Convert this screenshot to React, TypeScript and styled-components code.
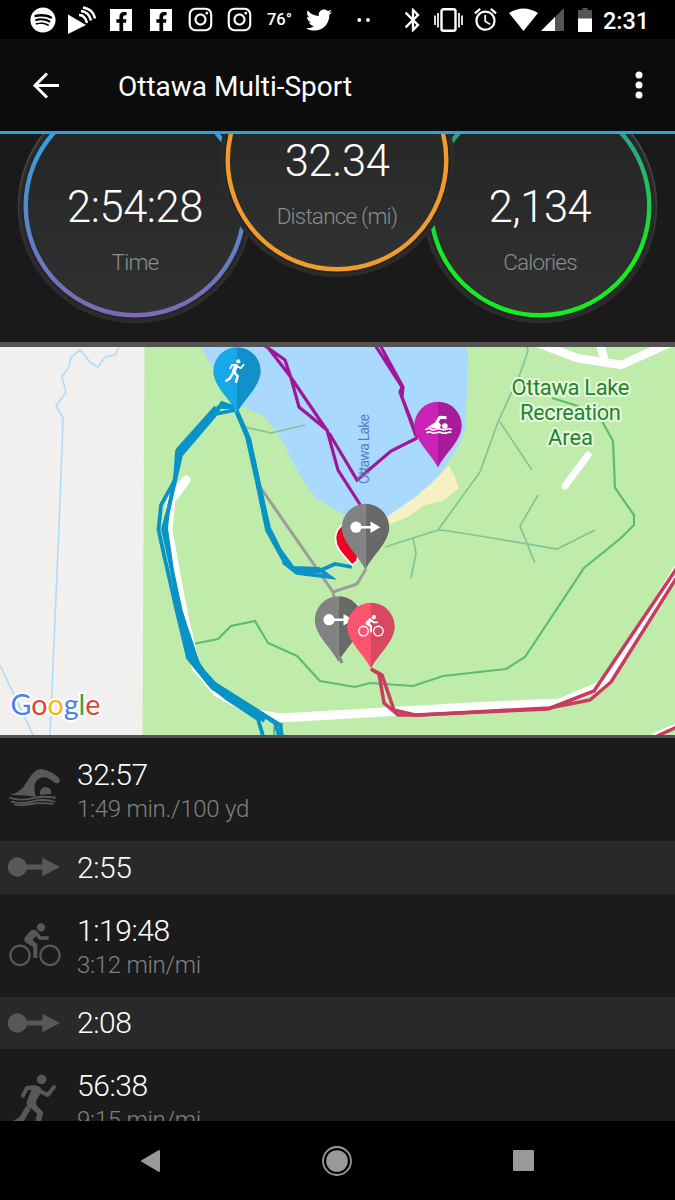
import React from 'react';
import styled, { createGlobalStyle } from 'styled-components';
import { FaSpotify, FaFacebookF, FaInstagram, FaTwitter } from 'react-icons/fa';
import { MdBluetooth, MdAlarm } from 'react-icons/md';

const GlobalStyle = createGlobalStyle`
  *, *::before, *::after { box-sizing: border-box; }
  body { margin: 0; background: #000; font-family: Roboto, "Liberation Sans", sans-serif; }
  svg { display: block; }
`;

const Screen = styled.div`
  width: 675px;
  height: 1200px;
  display: flex;
  flex-direction: column;
  overflow: hidden;
  background: #1b1b1b;
  color: #fff;
`;

const StatusBar = styled.div`
  flex: none;
  height: 39px;
  display: flex;
  align-items: center;
  background: #000;
`;

const StatusItem = styled.div<{ $w: number; $gap: number }>`
  flex: none;
  width: ${(p) => p.$w}px;
  margin-left: ${(p) => p.$gap}px;
  height: 39px;
  display: flex;
  align-items: center;
  justify-content: center;
  svg { flex: none; }
`;

const FacebookTile = styled.div`
  width: 22px;
  height: 22px;
  background: #fff;
  color: #000;
  display: flex;
  justify-content: flex-end;
  align-items: flex-end;
  padding-right: 1px;
  overflow: hidden;
`;

const Temperature = styled.span`
  font-size: 16.5px;
  font-weight: 500;
  white-space: nowrap;
  line-height: 39px;
`;

const Clock = styled.span`
  font-size: 23.5px;
  font-weight: 500;
  white-space: nowrap;
  padding-top: 3px;
`;

const AppBar = styled.header`
  flex: none;
  height: 95px;
  padding: 0 28px 0 30px;
  display: flex;
  align-items: center;
  background: #0c0c0c;
  border-bottom: 3px solid #2ca3dd;
`;

const Title = styled.h1`
  margin: 3px 0 0 56px;
  flex: 1;
  font-size: 28px;
  font-weight: 400;
`;

const GaugePanel = styled.section`
  flex: none;
  height: 208px;
  overflow: hidden;
  background: #1a1a1a;
`;

const GaugeRow = styled.div`
  display: flex;
  align-items: flex-start;
  margin-top: -92px;
  padding-left: 17px;
`;

const GaugeBox = styled.div<{ $raised?: boolean }>`
  flex: none;
  width: 236px;
  height: 236px;
  display: grid;
  margin-top: ${(p) => (p.$raised ? 0 : 46)}px;
  margin-left: ${(p) => (p.$raised ? -34 : 0)}px;
  margin-right: ${(p) => (p.$raised ? -33 : 0)}px;
  z-index: ${(p) => (p.$raised ? 1 : 0)};
  > * { grid-area: 1 / 1; }
`;

const GaugeText = styled.div`
  display: flex;
  flex-direction: column;
  align-items: center;
  padding-top: 95px;
`;

const GaugeValue = styled.div`
  font-size: 43.5px;
  font-weight: 300;
  line-height: 50px;
  letter-spacing: -0.45px;
`;

const GaugeLabel = styled.div`
  margin-top: 16px;
  font-size: 22.5px;
  font-weight: 300;
  line-height: 26px;
  letter-spacing: -0.8px;
  color: #8b8b8b;
`;

const MapFrame = styled.section`
  flex: none;
  height: 396px;
  border-top: 5px solid #555352;
  border-bottom: 3px solid #505152;
`;

const SegmentList = styled.ul`
  flex: 1;
  min-height: 0;
  margin: 0;
  padding: 0;
  overflow: hidden;
  list-style: none;
`;

const Segment = styled.li<{ $transition?: boolean }>`
  height: ${(p) => (p.$transition ? 52.5 : 103)}px;
  padding-left: 8px;
  display: flex;
  align-items: ${(p) => (p.$transition ? 'center' : 'flex-start')};
  background: ${(p) => (p.$transition ? '#292929' : '#1b1b1b')};
`;

const SegmentIcon = styled.div<{ $top?: number }>`
  width: 52px;
  margin-right: 17px;
  padding-top: ${(p) => p.$top ?? 0}px;
  color: #585858;
`;

const SegmentText = styled.div<{ $transition?: boolean }>`
  padding-top: ${(p) => (p.$transition ? 0 : 19)}px;
`;

const Duration = styled.div`
  font-size: 30px;
  font-weight: 300;
  line-height: 35px;
  letter-spacing: -0.45px;
`;

const Pace = styled.div`
  font-size: 24px;
  font-weight: 300;
  line-height: 34px;
  letter-spacing: -0.27px;
  color: #808080;
`;

const NavBar = styled.nav`
  flex: none;
  height: 79px;
  display: flex;
  align-items: center;
  background: #000;
  padding: 0 141px 0 140px;
  justify-content: space-between;
`;

type IconProps = React.SVGProps<SVGSVGElement>;

const SwimIcon = (p: IconProps) => (
  <svg viewBox="24 98 156 120" width="52" height="40" {...p}>
    <path fill="currentColor" d="M30 182Q58 174 70 158C88 132 100 106 122 104C140 106 164 118 176 130Q181 137 179 143Q175 149 166 146Q146 131 134 129Q115 129 107 144C101 157 103 171 108 187Q70 181 30 182Z" />
    <path fill="currentColor" d="M122 182A17 16 0 1 1 153 179Q138 179 122 182Z" />
    <path fill="none" stroke="currentColor" strokeWidth="5.500" d="M27 190Q62 201 96 192T167 191M33 202Q64 210 98 201T166 203M42 211Q66 214 94 209T160 209" />
  </svg>
);

/* Compact swimmer used on the map pin: bent arm over two rows of waves. */
const SwimPinIcon = (p: IconProps) => (
  <svg viewBox="298 58 84 62" width="28" height="20.7" {...p}>
    <g fill="none" stroke="currentColor" strokeLinejoin="round">
      <path strokeWidth="9" d="M364 69L344 68L334 84" />
      <path strokeWidth="5" d="M301 106Q308 98 316 103T332 104T348 104T364 104T380 105M304 115Q312 109 318 113T334 114T350 114T366 114T378 114" />
    </g>
    <path fill="currentColor" d="M337 78L348 92L344 100Q330 104 308 97Z" />
    <circle cx="359" cy="94" r="8.500" fill="currentColor" />
  </svg>
);

const BikeIcon = ({ wheel = 6.5, ...p }: IconProps & { wheel?: number }) => (
  <svg viewBox="22 560 160 136" width="53.3" height="45.3" {...p}>
    <g fill="none" stroke="currentColor" strokeWidth={wheel}>
      <circle cx="58" cy="660" r="29" />
      <circle cx="148" cy="660" r="29" />
    </g>
    <circle cx="121" cy="576" r="12.500" fill="currentColor" />
    <path fill="currentColor" d="M72 607L88 588Q98 579 108 587L121 603H144V613H116L106 602L95 614L110 626V668H98V636L76 622Q68 616 72 607Z" />
  </svg>
);

const RunIcon = (p: IconProps) => (
  <svg viewBox="24 312 156 180" width="52" height="60" {...p}>
    <circle cx="125" cy="328" r="14.500" fill="currentColor" />
    <g fill="none" stroke="currentColor" strokeLinecap="round" strokeLinejoin="round">
      <path strokeWidth="12" d="M69 377L80 355L106 353M112 360L143 375L162 351" />
      <path strokeWidth="17" d="M93 402L121 430L110 470M82 418L66 446L42 462" />
    </g>
    <path fill="currentColor" d="M78 349Q98 343 116 349Q128 356 122 369L108 394L110 408L88 416Q75 404 82 390L94 361Z" />
  </svg>
);

const TransitionIcon = (p: IconProps) => (
  <svg viewBox="0 0 52 20" width="52" height="20" fill="currentColor" {...p}>
    <circle cx="9.500" cy="10" r="9.700" />
    <path d="M18 7.600H34.300V.8L52 10L34.300 19.200V12.400H18Z" />
  </svg>
);

const TransitionPinIcon = () => (
  <g fill="currentColor">
    <circle cx="-9.500" cy="-0.300" r="5.600" />
    <path d="M-6-1.500H5V-6L14.800-.2L5 5.600V1H-6Z" />
  </g>
);

type GaugeProps = { id: string; value: string; label: string; from: string; to: string; raised?: boolean };

const Gauge = ({ id, value, label, from, to, raised }: GaugeProps) => (
  <GaugeBox $raised={raised}>
    <svg width="236" height="236" viewBox="0 0 236 236">
      <defs>
        <linearGradient id={`${id}-ring`} x1="0" y1="0" x2="0" y2="1">
          <stop offset="0.2" stopColor={from} />
          <stop offset={id === 'cal' ? 0.72 : 1} stopColor={to} />
        </linearGradient>
        <linearGradient id={`${id}-disc`} x1="0" y1="0" x2="0" y2="1">
          <stop offset="0" stopColor="#232323" />
          <stop offset="1" stopColor="#303131" />
        </linearGradient>
        <linearGradient id={`${id}-edge`} x1="0" y1="0" x2="0" y2="1">
          <stop offset="0.1" stopColor="#505050" />
          <stop offset="0.75" stopColor="#2c2c2c" />
        </linearGradient>
      </defs>
      <circle cx="118" cy="118" r="116.500" fill="#2b2b2b" stroke={raised ? '#2c2c2a' : `url(#${id}-edge)`} strokeWidth="1.600" />
      <circle cx="118" cy="118" r="112" fill="none" stroke="#1b1b1b" strokeWidth="2.500" opacity="0.4" />
      <circle cx="118" cy="118" r="109.300" fill={`url(#${id}-disc)`} stroke={`url(#${id}-ring)`} strokeWidth="4.400" />
    </svg>
    <GaugeText>
      <GaugeValue>{value}</GaugeValue>
      <GaugeLabel>{label}</GaugeLabel>
    </GaugeText>
  </GaugeBox>
);

type PinProps = { x: number; y: number; left: string; right: string; children?: React.ReactNode };

const Pin = ({ x, y, left, right, children }: PinProps) => (
  <g transform={`translate(${x} ${y})`} color="#fff">
    <path fill={left} d="M0 42C-7 28-23.700 15-23.700 0A23.700 23.700 0 0 1 0-23.700Z" />
    <path fill={right} d="M0 42C7 28 23.700 15 23.700 0A23.700 23.700 0 0 0 0-23.700Z" />
    {children}
  </g>
);

const TrailMap = () => (
  <svg width="675" height="388" viewBox="0 347 675 388">
    <rect y="347" width="675" height="388" fill="#bfecab" />
    <path fill="#f1f0ee" d="M0 347H144.500L142.500 735H0Z" />
    <g fill="none" stroke="#b2dcf7" strokeWidth="1.700">
      <path d="M119 347L115 355L105 357L98 367L91 363L80 350L71 357L69 367L62 377L66 392L56 406L63 418L62 450L58 550L50 735" />
      <path d="M0 665L33 735" />
    </g>
    <path fill="#aad9ff" d="M201 347L213 369L243 407L262 415L278 433L296 469L315 498L345 515L366 525L390 515L417 496L441 473L458 447L465 430L467 390L467.500 347Z" />
    <path fill="#f7efc5" d="M449 465L454 475L459 488L443 501L425 505L408 517L390 524L378 525L391 514L417 496L434 481Z" />
    <g fill="none" stroke="#82c496" strokeWidth="1.700">
      <path d="M527 347L528 351L520 374L498 422L480 472L438 530L385 547M245 427L271 433L305 425M500 422L532 470M413 538L416 553L411 578M438 530L449 531L498 539L557 549L595 530M538 495L520 526L535 563" />
      <path stroke="#5dbb73" strokeWidth="2.200" d="M193 644L218 639L231 626L255 621L268 643L297 656L320 681L355 687L370 683L413 686L443 676L506 669L525 657L584 568L621 538L634 525V515L615 488L613 441L602 421L578 406L552 398" />
      <path stroke="#65bd7c" strokeWidth="2" d="M274 727V735M282 720V735" />
    </g>
    <g fill="none" stroke="#fff" strokeLinecap="round">
      <path strokeWidth="9" strokeLinejoin="round" d="M186 480L171 500L168 530L176 575L184 617L196 667L217 692L257 714L280 718L480 706.500L560 703L600 686L617 665L685 558" />
      <path strokeWidth="8.500" strokeLinejoin="round" d="M535 342L577 358L621 365L674 341M600 344L605 362" />
      <path strokeWidth="7" d="M565 486L588 455" />
      <path strokeWidth="5" d="M655 735L677 726" />
    </g>
    <path fill="none" stroke="#9d9d98" strokeWidth="3" d="M258 484L333 592L357 584L366 569M333 592L339 620" />
    <g fill="none" stroke="#a0169a" strokeWidth="3.200">
      <path d="M264 345L285 360L291 378L299 407L327 430L338 470L361 506M266 345L290 376L328 432M329 433L357 480L391 451L417 438M375 345L402 387L400 392L416 436M380 345L403 387L402 397L418 438" />
    </g>
    <g fill="none" stroke="#0993c6" strokeWidth="3.800" strokeLinejoin="miter">
      <path d="M236 411L247 437L257 482L267 530L285 563L298 571L319 571L335 564L352 567M237 411L249 438L259 484L269 528L280 550L293 568L319 569L330 577L297 573L283 562" />
      <path d="M236 408L222 403L216 413L177 451L175 480L161 505L158.500 530L164 555L177 612L188 658L209 684L226 698L258 719L263 736" />
      <path d="M236 407L219 407L179 455L174 483L168 512L166 528L172 570L179 610L194 661L216 685L275 723L279 736" />
      <path d="M235 410L216 414L181 455L169 507L163 529L168 552L181 612L198 663L209 680L280 725L282 736" />
      <path d="M180 612L192 660M191 657L213 687L265 720" strokeWidth="6" />
      <path d="M178.500 451L217 408" strokeWidth="7" />
      <path d="M249 440L258 482L267 524" strokeWidth="4.500" />
    </g>
    <g fill="none" stroke="#c83c60" strokeWidth="3.500" strokeLinejoin="round">
      <path d="M371 669L382 675L394 710L415 715L548 709L594 691L677 568" />
      <path d="M371 669L379 674L384 703L398 715L420 715L549 708L590 700L611 682L677 577" />
      <path d="M657 736L677 727" />
    </g>
    <path fill="#f00022" stroke="#fff" strokeWidth="1.600" d="M352 565C346 557 335.500 550 335.500 538Q336 528 345 523L362 530L357 561Z" />
    <Pin x={237} y={371} left="#19a8e7" right="#138fca">
      <RunIcon x="-14" y="-12" width="24" height="26" />
    </Pin>
    <Pin x={438} y={425.5} left="#ca22b7" right="#a61c99">
      <SwimPinIcon x="-13.500" y="-11.500" />
    </Pin>
    <Pin x={365.5} y={527.5} left="#828282" right="#696969">
      <TransitionPinIcon />
    </Pin>
    <Pin x={338.5} y={620} left="#828282" right="#696969">
      <TransitionPinIcon />
    </Pin>
    <path d="M339 656L342 663" stroke="#888" strokeWidth="3" />
    <Pin x={371} y={626.5} left="#ff5470" right="#d8485f">
      <BikeIcon wheel={8} x="-13.500" y="-12" width="26.500" height="22.500" />
    </Pin>
    <text transform="translate(369 484) rotate(-90)" fontSize="14" fill="#4f82c4" textLength="70">Ottawa Lake</text>
    <g fontSize="22" fill="#25832f" textAnchor="middle" stroke="#e7f8df" strokeWidth="4" paintOrder="stroke" strokeLinejoin="round">
      <text x="570.500" y="395" textLength="118">Ottawa Lake</text>
      <text x="570.500" y="420" textLength="101">Recreation</text>
      <text x="570.500" y="445" textLength="45">Area</text>
    </g>
    <text x="10.500" y="715" fontFamily="Lato, sans-serif" fontWeight="400" fontSize="28.500" textLength="90" lengthAdjust="spacingAndGlyphs" stroke="#fff" strokeWidth="4" paintOrder="stroke" strokeLinejoin="round">
      <tspan fill="#4a80e8">G</tspan>
      <tspan fill="#db4436">o</tspan>
      <tspan fill="#f4b813">o</tspan>
      <tspan fill="#4a80e8">g</tspan>
      <tspan fill="#34a052">l</tspan>
      <tspan fill="#db4436">e</tspan>
    </text>
  </svg>
);

const StatusIcons = () => (
  <StatusBar>
    <StatusItem $w={26} $gap={30}><FaSpotify size={26} /></StatusItem>
    <StatusItem $w={28} $gap={12}>
      <svg width="28" height="28" viewBox="0 0 28 28">
        <path fill="#fff" d="M0 8.500L18 19L0 28Z" />
        <path fill="none" stroke="#fff" strokeWidth="2.500" d="M11 9Q17 9 19 17M13 5Q21 6 23 14.500M15 1.500Q25 3 27 12.500" />
      </svg>
    </StatusItem>
    <StatusItem $w={22} $gap={14}><FacebookTile><FaFacebookF size={19} /></FacebookTile></StatusItem>
    <StatusItem $w={22} $gap={18}><FacebookTile><FaFacebookF size={19} /></FacebookTile></StatusItem>
    <StatusItem $w={24} $gap={16}><FaInstagram size={27} /></StatusItem>
    <StatusItem $w={24} $gap={15}><FaInstagram size={27} /></StatusItem>
    <StatusItem $w={25} $gap={16}><Temperature>76°</Temperature></StatusItem>
    <StatusItem $w={26} $gap={14}><FaTwitter size={26} /></StatusItem>
    <StatusItem $w={14} $gap={25}>
      <svg width="14" height="4" viewBox="0 0 14 4" fill="#fff"><circle cx="2.300" cy="2" r="1.900" /><circle cx="11" cy="2" r="1.900" /></svg>
    </StatusItem>
    <StatusItem $w={16} $gap={34}><MdBluetooth size={28} /></StatusItem>
    <StatusItem $w={29} $gap={13}>
      <svg width="29" height="24" viewBox="0 0 29 24" fill="none" stroke="#fff">
        <rect x="7.500" y="1.300" width="14" height="21.400" rx="2" strokeWidth="2.400" />
        <path strokeWidth="1.700" d="M1 7.500V17M4 5V19.500M25 5V19.500M28 7.500V17" />
      </svg>
    </StatusItem>
    <StatusItem $w={23} $gap={11}><MdAlarm size={27} /></StatusItem>
    <StatusItem $w={29} $gap={12}>
      <svg width="29" height="23" viewBox="0 0 29 23"><path fill="#fff" d="M0 5Q14.500-4 29 5L14.500 23Z" /></svg>
    </StatusItem>
    <StatusItem $w={23} $gap={3}>
      <svg width="23" height="23" viewBox="0 0 23 23"><path fill="#555" d="M23 0V23H0Z" /><path fill="#fff" d="M14 9V23H0Z" /></svg>
    </StatusItem>
    <StatusItem $w={14} $gap={14}>
      <svg width="14" height="24" viewBox="0 0 14 24"><path fill="#555" d="M4.500 0H9.500V2H14V11H0V2H4.500Z" /><path fill="#fff" d="M0 10.500H14V24H0Z" /></svg>
    </StatusItem>
    <StatusItem $w={44} $gap={12}><Clock>2:31</Clock></StatusItem>
  </StatusBar>
);

export default function App() {
  return (
    <Screen>
      <GlobalStyle />
      <StatusIcons />
      <AppBar>
        <svg width="32" height="30" viewBox="0 0 32 30" fill="none" stroke="#fff" strokeWidth="3">
          <path d="M29 15.500H5M17 3.500L5 15.500L17 27.500" />
        </svg>
        <Title>Ottawa Multi-Sport</Title>
        <svg width="16" height="28" viewBox="0 0 16 28" fill="#fff">
          <circle cx="8" cy="4" r="3.500" /><circle cx="8" cy="14" r="3.500" /><circle cx="8" cy="24" r="3.500" />
        </svg>
      </AppBar>
      <GaugePanel>
        <GaugeRow>
          <Gauge id="time" value="2:54:28" label="Time" from="#35a0dc" to="#8068b4" />
          <Gauge id="dist" value="32.34" label="Distance (mi)" from="#f29a2a" to="#f09c2c" raised />
          <Gauge id="cal" value="2,134" label="Calories" from="#2aa384" to="#16ec20" />
        </GaugeRow>
      </GaugePanel>
      <MapFrame><TrailMap /></MapFrame>
      <SegmentList>
        <Segment>
          <SegmentIcon $top={29}><SwimIcon /></SegmentIcon>
          <SegmentText><Duration>32:57</Duration><Pace>1:49 min./100 yd</Pace></SegmentText>
        </Segment>
        <Segment $transition>
          <SegmentIcon><TransitionIcon /></SegmentIcon>
          <SegmentText $transition><Duration>2:55</Duration></SegmentText>
        </Segment>
        <Segment>
          <SegmentIcon $top={28}><BikeIcon /></SegmentIcon>
          <SegmentText><Duration>1:19:48</Duration><Pace>3:12 min/mi</Pace></SegmentText>
        </Segment>
        <Segment $transition>
          <SegmentIcon><TransitionIcon /></SegmentIcon>
          <SegmentText $transition><Duration>2:08</Duration></SegmentText>
        </Segment>
        <Segment>
          <SegmentIcon $top={25}><RunIcon /></SegmentIcon>
          <SegmentText><Duration>56:38</Duration><Pace>9:15 min/mi</Pace></SegmentText>
        </Segment>
      </SegmentList>
      <NavBar>
        <svg width="21" height="24" viewBox="0 0 21 24"><path fill="#999" stroke="#999" strokeWidth="2" strokeLinejoin="round" d="M2 12L19 2V22Z" /></svg>
        <svg width="30" height="30" viewBox="0 0 30 30"><circle cx="15" cy="15" r="14" fill="none" stroke="#999" strokeWidth="1.800" /><circle cx="15" cy="15" r="10.800" fill="#999" /></svg>
        <svg width="21" height="21" viewBox="0 0 21 21"><rect width="21" height="21" rx="1" fill="#999" /></svg>
      </NavBar>
    </Screen>
  );
}
